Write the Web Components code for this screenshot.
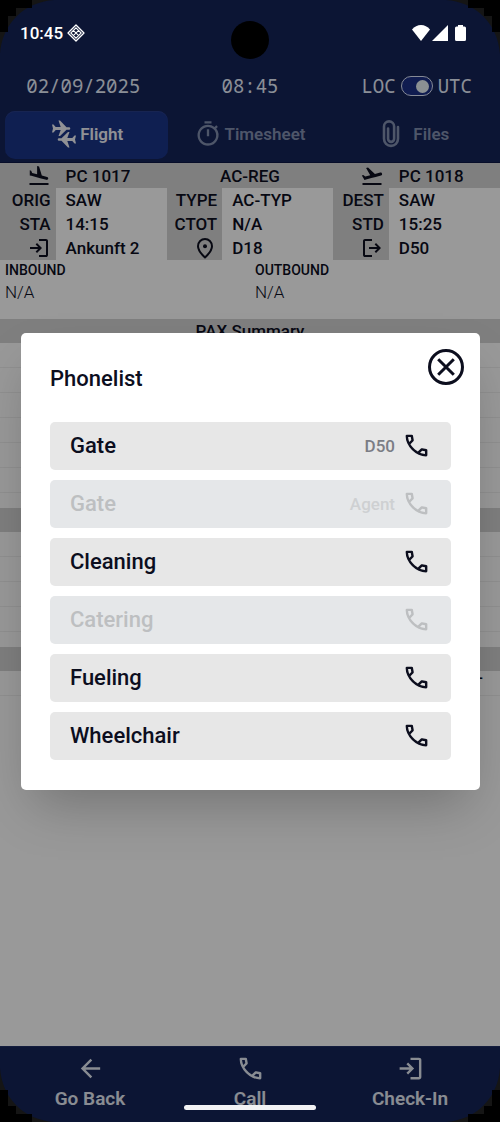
<!DOCTYPE html>
<html lang="en">
<head>
<meta charset="utf-8">
<meta name="viewport" content="width=device-width">
<title>Flight – Phonelist</title>
<style>
html,body{margin:0;height:100%}
body{font-family:Roboto,"Liberation Sans",sans-serif;font-weight:500;color:#0c0e1e;background:#fff}
</style>
</head>
<body>
<crew-app></crew-app>
<script>
const PLANE = 'M1 4.5h1.500l2.200 2.500h5L7.500 0.500H9l6.500 6.700h2.500a1.300 1.300 0 0 1 0 2.600h-2.500L9 16H7.500l2.200-6H4.700l-2.200 2.500H1L2 8.500z';
const ICONS = {
  call:['0 -960 960 960','<path d="M798-120q-125 0-247-54.5T329-329Q229-429 174.5-551T120-798q0-18 12-30t30-12h162q14 0 25 9.5t13 22.5l26 140q2 16-1 27t-11 19l-97 98q20 37 47.5 71.5T387-386q31 31 65 57.5t72 48.5l94-94q9-9 23.5-13.5T670-390l138 28q14 4 23 14.5t9 23.5v162q0 18-12 30t-30 12ZM241-600l66-66-17-94h-89q5 41 14 81t26 79Zm358 358q39 17 79.5 27t81.5 13v-88l-94-19-67 67Z"/>'],
  login:['0 -960 960 960','<path d="M480-120v-80h280v-560H480v-80h280q33 0 56.5 23.5T840-760v560q0 33-23.5 56.5T760-120H480Zm-80-160-55-58 102-102H120v-80h327L345-622l55-58 200 200-200 200Z"/>'],
  logout:['0 -960 960 960','<path d="M200-120q-33 0-56.5-23.5T120-200v-560q0-33 23.5-56.5T200-840h280v80H200v560h280v80H200Zm440-160-55-58 102-102H360v-80h327L585-622l55-58 200 200-200 200Z"/>'],
  back:['0 -960 960 960','<path d="m313-440 224 224-57 56-320-320 320-320 57 56-224 224h487v80H313Z"/>'],
  land:['0 0 24 24','<path d="M2.5 19h19v2h-19zm7.18-5.73l4.35 1.16 5.31 1.42c.8.21 1.62-.26 1.84-1.06.21-.8-.26-1.62-1.06-1.84l-5.31-1.42-2.76-9.02L10.12 2v8.28L5.15 8.95l-.93-2.32-1.45-.39v5.17l1.6.43 5.31 1.43z"/>'],
  takeoff:['0 0 24 24','<path d="M2.5 19h19v2h-19zm19.57-9.36c-.21-.8-1.04-1.28-1.84-1.06L14.92 10l-6.9-6.43-1.93.51 4.14 7.17-4.97 1.33-1.97-1.54-1.45.39 1.82 3.16.77 1.33 1.6-.43 5.31-1.42 4.35-1.16L21 11.49c.81-.23 1.28-1.05 1.07-1.85z"/>'],
  pin:['0 0 24 24','<path fill="none" stroke="currentColor" stroke-width="2" stroke-linejoin="round" d="M12 21.5c4.7-4.3 7-8 7-11.2C19 5.9 15.7 3 12 3S5 5.9 5 10.3c0 3.2 2.3 6.900 7 11.200z"/><circle cx="12" cy="10.300" r="2"/>'],
  timer:['0 0 24 24','<path d="M9 1h6v2H9zm10.030 6.390l1.420-1.420c-.43-.51-.9-.99-1.410-1.410l-1.420 1.420A8.962 8.962 0 0012 4c-4.970 0-9 4.030-9 9s4.020 9 9 9a8.994 8.994 0 007.030-14.610zM12 20c-3.870 0-7-3.130-7-7s3.130-7 7-7 7 3.130 7 7-3.130 7-7 7zm-1-12h2v6h-2z"/>'],
  clip:['0 0 26 26','<path fill="none" stroke="currentColor" stroke-width="2.400" stroke-linecap="round" d="M19.500 6.500v11a6.500 6.500 0 0 1-13 0V6a4.700 4.700 0 0 1 9.400 0v11.500a2.800 2.800 0 0 1-5.600 0V8"/>'],
  planes:['0 0 26 28',`<path d="${PLANE}"/><path transform="rotate(180 13 14)" d="${PLANE}"/>`],
  close:['0 0 36 36','<g fill="none" stroke="currentColor" stroke-width="3"><circle cx="18" cy="18" r="16.500"/><path d="M10.200 10.200l15.600 15.600M25.800 10.200L10.200 25.800"/></g>'],
  wifi:['0 0 18 16','<path d="M9 16L0 4.500C2.500 1.500 5.500 0 9 0s6.500 1.500 9 4.500z"/>'],
  signal:['0 0 16 16','<path d="M16 0v16H0z"/>'],
  battery:['0 0 11 16','<path d="M3 0h5v1.500h1.500A1.500 1.500 0 0 1 11 3v11.500a1.500 1.500 0 0 1-1.500 1.500h-8A1.500 1.500 0 0 1 0 14.500V3a1.500 1.500 0 0 1 1.500-1.500H3z"/>'],
  diamond:['0 0 18 18','<g fill="none" stroke="currentColor"><path stroke-width="1.300" stroke-linejoin="round" d="M9 1l8 8-8 8-8-8z"/><path stroke-width="1.100" d="M9 3.800l5.200 5.200L9 14.200 3.800 9zM6.400 6.400l5.200 5.200M11.600 6.400l-5.200 5.200"/></g>']
};

const define = (name, html, setup) => {
  const template = document.createElement('template');
  template.innerHTML = html;
  customElements.define(name, class extends HTMLElement {
    constructor(){
      super();
      this.attachShadow({mode:'open'}).append(template.content.cloneNode(true));
    }
    connectedCallback(){ if (setup) setup(this, this.shadowRoot); }
  });
};

customElements.define('ui-icon', class extends HTMLElement {
  static observedAttributes = ['name'];
  constructor(){
    super();
    this.attachShadow({mode:'open'}).innerHTML = `<style>
:host{display:inline-block;flex:none;width:24px;height:24px}
svg{display:block;width:100%;height:100%;fill:currentColor}
</style><svg aria-hidden="true"></svg>`;
  }
  attributeChangedCallback(_, before, name){
    const [box, body] = ICONS[name];
    const svg = this.shadowRoot.querySelector('svg');
    svg.setAttribute('viewBox', box);
    svg.innerHTML = body;
  }
});

define('status-bar', `<style>
:host{display:grid;grid-template-columns:1fr 40px 1fr;align-items:center;height:66px;padding:0 20px;box-sizing:border-box;color:#fff;font-size:17px;position:absolute;inset:0 0 auto;z-index:3}
div{display:flex;align-items:center;gap:4px}
.right{justify-content:flex-end;gap:2px;padding-right:14px}
.camera{width:38px;height:38px;border-radius:50%;background:#000;margin-top:14px;justify-self:center}
.wifi{width:18px;height:16px}.signal{width:16px;height:16px}.battery{width:11px;height:16px;margin-left:5px}
.diamond{width:18px;height:18px}
</style><div><span>10:45</span><ui-icon class="diamond" name="diamond"></ui-icon></div><span class="camera"></span>
<div class="right"><ui-icon class="wifi" name="wifi"></ui-icon><ui-icon class="signal" name="signal"></ui-icon><ui-icon class="battery" name="battery"></ui-icon></div>`);

define('zone-switch', `<style>
:host{display:block}
label{display:flex;align-items:center;justify-content:center;gap:5px}
input{appearance:none;margin:0;width:32px;height:20px;border:1px solid #dfe6fa;border-radius:10px;background:#1b2f86;display:flex;align-items:center;justify-content:flex-end;padding:0 3px;box-sizing:border-box}
input::before{content:"";width:13px;height:13px;border-radius:50%;background:#e8f0f5}
input:not(:checked){justify-content:flex-start}
</style><label><span>LOC</span><input type="checkbox" role="switch" aria-label="Show UTC times" checked><span>UTC</span></label>`);

define('nav-tab', `<style>
:host{display:block}
button{all:unset;box-sizing:border-box;display:flex;align-items:center;justify-content:center;gap:2px;width:100%;height:48px;padding-bottom:2px;border-radius:10px;color:#838fb0;font:600 17px/24px Roboto,sans-serif;cursor:pointer}
:host([active]) button{background:#1a3488;color:#f0f2f8;box-shadow:inset 0 1px #273d88}
:host([spaced]) button{gap:8px}
ui-icon{width:28px;height:28px}
</style><button type="button" role="tab"><ui-icon></ui-icon><slot></slot></button>`, (el, root) => {
  root.querySelector('ui-icon').setAttribute('name', el.getAttribute('icon'));
  root.querySelector('button').setAttribute('aria-selected', el.hasAttribute('active'));
});

define('app-header', `<style>
:host{display:block;background:#142357;color:#e8effc;padding-top:66px;border-bottom:1px solid #0c1745}
.clock{display:grid;grid-template-columns:repeat(3,1fr);height:40px;align-items:center;text-align:center;font:400 19px/24px "Droid Sans Mono","Noto Sans Mono","DejaVu Sans Mono",monospace}
.tabs{display:grid;grid-template-columns:repeat(3,1fr);padding:5px 5px 3px}
</style><div class="clock"><span>02/09/2025</span><span>08:45</span><zone-switch></zone-switch></div>
<div class="tabs" role="tablist"><slot></slot></div>`);

define('flight-table', `<style>
:host{display:block}
table{width:100%;border-collapse:collapse;table-layout:fixed;font-size:17px;line-height:24px}
th,td{padding:0;height:24px;font-weight:500;white-space:nowrap}
col.k{width:11.11%}
col.v{width:22.22%}
thead{background:#d4d4d4}
thead th,thead td{height:25px}
td{text-align:left;padding-left:10px}
th{text-align:right;background:#d4d4d4;padding-right:5px}
thead .reg{text-align:center;padding:0}
ui-icon{display:block;margin-left:auto;margin-right:0}
</style><table>
<colgroup><col class="k"><col class="v"><col class="k"><col class="v"><col class="k"><col class="v"></colgroup>
<thead><tr><th aria-label="Arrival"><ui-icon name="land"></ui-icon></th><td>PC 1017</td><td class="reg" colspan="2">AC-REG</td><th aria-label="Departure"><ui-icon name="takeoff"></ui-icon></th><td>PC 1018</td></tr></thead>
<tbody>
<tr><th>ORIG</th><td>SAW</td><th>TYPE</th><td>AC-TYP</td><th>DEST</th><td>SAW</td></tr>
<tr><th>STA</th><td>14:15</td><th>CTOT</th><td>N/A</td><th>STD</th><td>15:25</td></tr>
<tr><th aria-label="Arrival gate"><ui-icon name="login"></ui-icon></th><td>Ankunft 2</td><th aria-label="Stand"><ui-icon name="pin"></ui-icon></th><td>D18</td><th aria-label="Departure gate"><ui-icon name="logout"></ui-icon></th><td>D50</td></tr>
</tbody></table>`);

define('bound-notes', `<style>
:host{display:grid;grid-template-columns:1fr 1fr;padding-bottom:15px}
dl{margin:0;padding-left:5px}
dt{font-size:14px;line-height:20px}
dd{margin:0;font-size:17px;font-weight:300;line-height:24px}
</style><dl><dt>INBOUND</dt><dd>N/A</dd></dl><dl><dt>OUTBOUND</dt><dd>N/A</dd></dl>`);

define('data-section', `<style>
:host{display:block;margin-bottom:15px}
h2{margin:0;height:24px;background:#d4d4d4;font-size:17px;line-height:24px;font-weight:500;text-align:center}
.row{height:25px;box-sizing:border-box;border-bottom:1px solid #f0f0f0;display:flex;justify-content:flex-end;padding-right:17px;line-height:14px}
</style><h2><slot></slot></h2>`, (el, root) => {
  const count = Number(el.getAttribute('rows'));
  for (let i = 0; i < count; i++) {
    const row = document.createElement('div');
    row.className = 'row';
    row.textContent = el.getAttribute('value') || '';
    root.append(row);
  }
});

define('nav-action', `<style>
:host{display:block}
button{all:unset;box-sizing:border-box;width:100%;display:flex;flex-direction:column;align-items:center;gap:4px;font:600 19px/24px Roboto,sans-serif;color:#e4eaf4;cursor:pointer}
ui-icon{width:29px;height:29px}
</style><button type="button"><ui-icon></ui-icon><slot></slot></button>`, (el, root) => {
  root.querySelector('ui-icon').setAttribute('name', el.getAttribute('icon'));
});

define('bottom-nav', `<style>
:host{display:grid;grid-template-columns:repeat(3,1fr);height:76px;padding:7px 10px 0;box-sizing:border-box;background:#142357;border-top:1px solid #202f66}
</style><slot></slot>`);

define('phone-entry', `<style>
:host{display:block}
button{all:unset;box-sizing:border-box;display:flex;align-items:center;width:100%;height:48px;padding:0 20px;border-radius:5px;background:#e7e7e7;color:#0c0e1e;font:500 22px/28px Roboto,sans-serif;cursor:pointer}
.name{flex:1}
.detail{font-size:17px;color:#7b7d85;margin-right:7px}
ui-icon{width:29px;height:29px}
button:disabled{background:#e5e7e9;color:#bdbfc1;cursor:default}
button:disabled .detail{color:#ced0d2}
</style><button type="button"><span class="name"><slot></slot></span><span class="detail"><slot name="detail"></slot></span><ui-icon name="call"></ui-icon></button>`, (el, root) => {
  root.querySelector('button').disabled = el.hasAttribute('disabled');
});

define('phone-dialog', `<style>
:host{position:absolute;inset:0;z-index:2;display:grid;align-items:center;background:rgba(0,0,0,.4);padding:0 20px 0 21px}
section{position:relative;box-sizing:border-box;background:#fff;border-radius:5px;padding:31px 29px 30px;box-shadow:0 25px 50px -12px rgba(0,0,0,.25)}
h1{margin:0 0 28px;font-size:22px;line-height:30px;font-weight:500}
.list{display:grid;gap:10px}
.close{all:unset;position:absolute;top:16px;right:16px;width:36px;height:36px;cursor:pointer}
.close ui-icon{width:36px;height:36px;display:block}
</style><section role="dialog" aria-modal="true" aria-labelledby="t"><h1 id="t">Phonelist</h1>
<button class="close" type="button" aria-label="Close"><ui-icon name="close"></ui-icon></button>
<div class="list"><slot></slot></div></section>`);

define('screen-corners', `<style>
:host{position:absolute;inset:0;z-index:4;display:grid;grid-template-columns:auto auto;justify-content:space-between;align-content:space-between;pointer-events:none}
svg{display:block;width:56px;height:56px}
.tr{transform:scaleX(-1)}.bl{transform:scaleY(-1)}.br{transform:scale(-1,-1)}
.handle{position:absolute;left:50%;bottom:12px;width:132px;height:5px;margin-left:-66px;border-radius:3px;background:#f2f2f4}
</style>
${['tl','tr','bl','br'].map(c => `<svg class="${c}" viewBox="0 0 56 56" aria-hidden="true"><path fill="#151515" d="M0 0h54C24 2 2 24 0 54z"/><path d="M0 0h32v8H16v8H8v16H0z"/></svg>`).join('')}
<span class="handle"></span>`);

define('crew-app', `<style>
:host{position:relative;display:flex;flex-direction:column;min-height:100vh;overflow:hidden}
main{flex:1}
</style>
<status-bar></status-bar>
<app-header><nav-tab active icon="planes">Flight</nav-tab><nav-tab icon="timer">Timesheet</nav-tab><nav-tab spaced icon="clip">Files</nav-tab></app-header>
<main><flight-table></flight-table><bound-notes></bound-notes>
<data-section rows="6">PAX Summary</data-section>
<data-section rows="4"></data-section>
<data-section rows="1" value="-"></data-section></main>
<bottom-nav><nav-action icon="back">Go Back</nav-action><nav-action icon="call">Call</nav-action><nav-action icon="login">Check-In</nav-action></bottom-nav>
<phone-dialog>
<phone-entry>Gate<span slot="detail">D50</span></phone-entry>
<phone-entry disabled>Gate<span slot="detail">Agent</span></phone-entry>
<phone-entry>Cleaning</phone-entry>
<phone-entry disabled>Catering</phone-entry>
<phone-entry>Fueling</phone-entry>
<phone-entry>Wheelchair</phone-entry>
</phone-dialog>
<screen-corners></screen-corners>`);
</script>
</body>
</html>
